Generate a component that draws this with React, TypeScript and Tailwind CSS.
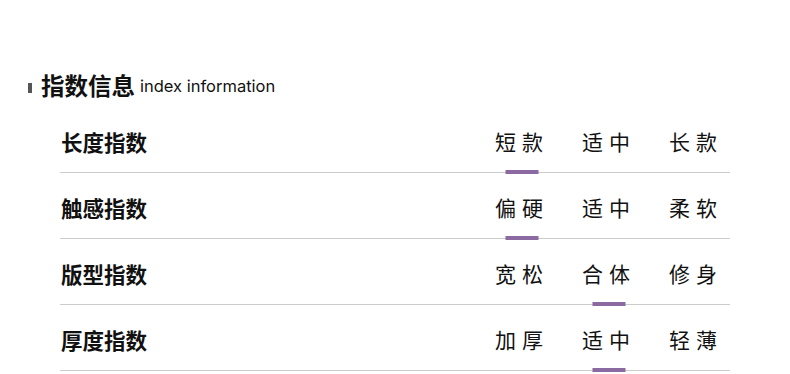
const cjk = '"Noto Sans CJK SC", "Noto Sans", sans-serif';

interface IndexRow {
  label: string;
  options: string[];
  active: number;
}

const rows: IndexRow[] = [
  { label: '长度指数', options: ['短款', '适中', '长款'], active: 0 },
  { label: '触感指数', options: ['偏硬', '适中', '柔软'], active: 0 },
  { label: '版型指数', options: ['宽松', '合体', '修身'], active: 1 },
  { label: '厚度指数', options: ['加厚', '适中', '轻薄'], active: 1 },
];

export default function App() {
  return (
    <div className="w-[790px] h-[374px] bg-white overflow-hidden pt-[71px]" style={{ fontFamily: cjk }}>
      {/* title */}
      <div className="flex items-end h-[28px] pl-[28px]">
        <span className="w-[4px] h-[10px] bg-[#555555] mb-[6px]" />
        <span className="ml-[9px] text-[23.5px] leading-[28px] font-bold text-[#111111]">指数信息</span>
        <span
          className="ml-[5px] text-[16.5px] leading-[24px] text-[#111111] mb-[1px]"
          style={{ fontFamily: '"Inter", "Liberation Sans", sans-serif' }}
        >
          index information
        </span>
      </div>

      <div className="mt-[8px] ml-[60px] w-[670px]">
        {rows.map((row) => (
          <div key={row.label} className="flex items-center h-[66px] pt-[5px] border-b border-[#cccccc]">
            <span className="pl-[1px] text-[21.5px] font-bold text-[#111111]">{row.label}</span>
            <div className="ml-auto flex self-stretch gap-[33px] pr-[7px]">
              {row.options.map((opt, i) => (
                <div key={opt + i} className="relative flex items-center">
                  <span className="text-[21px] font-normal tracking-[6px] text-[#111111]">{opt}</span>
                  {i === row.active && (
                    <span className="absolute bottom-[-2px] left-1/2 -translate-x-1/2 w-[33px] h-[4px] bg-[#8a6aa0]" />
                  )}
                </div>
              ))}
            </div>
          </div>
        ))}
      </div>
    </div>
  );
}
